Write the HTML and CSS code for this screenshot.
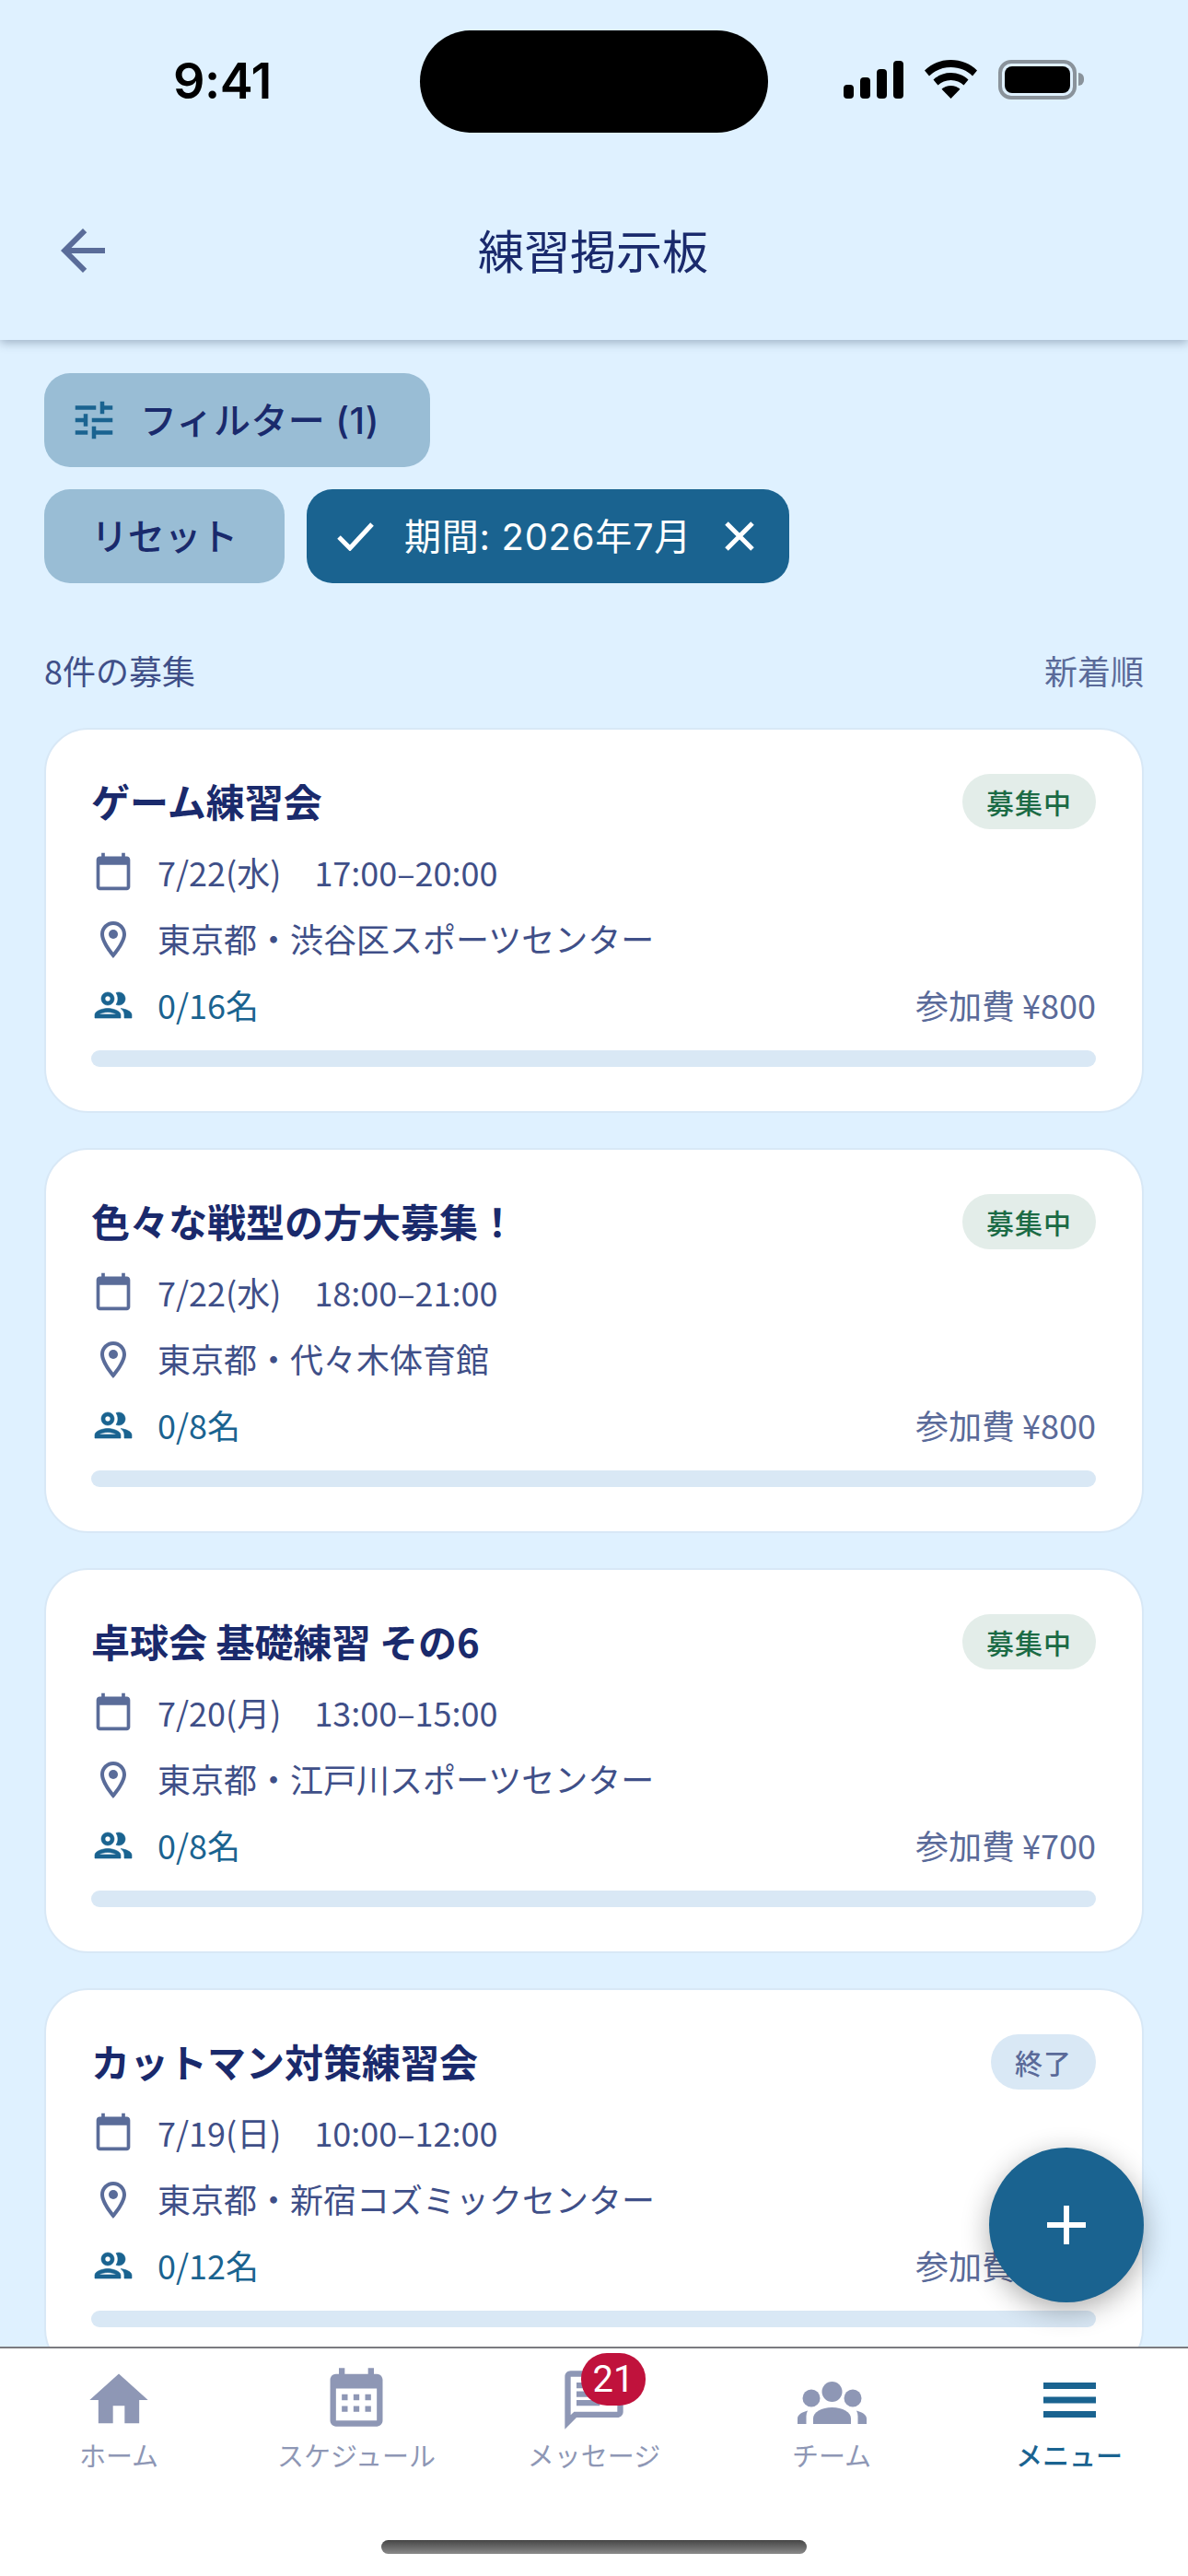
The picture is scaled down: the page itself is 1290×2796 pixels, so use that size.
FILE: index.html
```html
<!DOCTYPE html>
<html lang="ja">
<head>
  <meta charset="UTF-8">
  <meta name="viewport" content="width=device-width, initial-scale=1.0">
  <title>練習掲示板</title>
  <link rel="stylesheet" href="styles.css">
</head>
<body>
  <div class="phone">
    <header class="top">
      <div class="status">
        <span class="time">9:41</span>
        <div class="island"></div>
        <div class="status-icons">
          <svg class="signal" viewBox="0 0 65 41" fill="#000">
            <rect x="0" y="26" width="11" height="15" rx="4"/>
            <rect x="18" y="18" width="11" height="23" rx="4"/>
            <rect x="36" y="9" width="11" height="32" rx="4"/>
            <rect x="54" y="0" width="11" height="41" rx="4"/>
          </svg>
          <svg class="wifi" viewBox="0 0 57 42" fill="#000">
            <path d="M28.500 0C17.500 0 7.500 4 0 11.500l5 6C11 11.500 19 8 28.500 8S46 11.500 52 17.500l5-6C49.500 4 39.500 0 28.500 0z"/>
            <path d="M28.500 14c-7.500 0-14 2.800-19 7.500l5 6c3.500-3.400 8.500-5.500 14-5.500s10.500 2.100 14 5.500l5-6c-5-4.700-11.500-7.500-19-7.500z"/>
            <path d="M28.500 28c-4 0-7.500 1.500-10 3.800L28.500 42l10-10.200c-2.500-2.300-6-3.800-10-3.800z"/>
          </svg>
          <div class="battery"><div class="battery-fill"></div></div>
          <div class="battery-cap"></div>
        </div>
      </div>
      <div class="title-bar">
        <svg class="back" viewBox="0 0 24 24"><path d="M20 11H7.830l5.590-5.590L12 4l-8 8 8 8 1.410-1.410L7.830 13H20v-2z"/></svg>
        <h1>練習掲示板</h1>
      </div>
    </header>

    <main class="content">
      <div class="filters">
        <button class="chip filter-btn">
          <svg class="tune" viewBox="0 0 24 24"><path d="M3 17v2h6v-2H3zM3 5v2h10V5H3zm10 16v-2h8v-2h-8v-2h-2v6h2zM7 9v2H3v2h4v2h2V9H7zm14 4v-2H11v2h10zm-6-4h2V7h4V5h-4V3h-2v6z"/></svg>
          <span>フィルター (1)</span>
        </button>
        <div class="filter-row">
          <button class="chip reset"><span>リセット</span></button>
          <button class="chip active">
            <svg class="check" viewBox="0 0 40 32"><path d="M2 17l12 12L38 3"/></svg>
            <span>期間: 2026年7月</span>
            <svg class="close" viewBox="0 0 32 32"><path d="M2 2l28 28M30 2L2 30"/></svg>
          </button>
        </div>
      </div>

      <div class="list-head">
        <span class="count">8件の募集</span>
        <span class="sort">新着順</span>
      </div>

      <div class="cards">
        <article class="card">
          <div class="card-top">
            <h2>ゲーム練習会</h2>
            <span class="badge open">募集中</span>
          </div>
          <div class="row">
            <svg class="ico ico-cal" viewBox="0 0 24 24"><path d="M20 3h-1V1h-2v2H7V1H5v2H4c-1.100 0-2 .9-2 2v16c0 1.100.9 2 2 2h16c1.100 0 2-.9 2-2V5c0-1.100-.9-2-2-2zm0 18H4V8h16v13z"/></svg>
            <span>7/22(水)</span><span class="hours">17:00–20:00</span>
          </div>
          <div class="row">
            <svg class="ico" viewBox="0 0 24 24"><path d="M12 2C8.130 2 5 5.130 5 9c0 5.250 7 13 7 13s7-7.750 7-13c0-3.870-3.130-7-7-7zM7 9c0-2.760 2.240-5 5-5s5 2.240 5 5c0 2.880-2.880 7.190-5 9.880C9.920 16.210 7 11.850 7 9z"/><circle cx="12" cy="9" r="2.500"/></svg>
            <span>東京都・渋谷区スポーツセンター</span>
          </div>
          <div class="row">
            <svg class="ico ico-people" viewBox="0 0 24 24"><path d="M9 13.750c-2.340 0-7 1.170-7 3.500V19h14v-1.750c0-2.330-4.660-3.500-7-3.500zM4.340 17c.84-.58 2.870-1.250 4.660-1.250s3.820.67 4.660 1.250H4.340zM9 12c1.930 0 3.500-1.570 3.500-3.500S10.930 5 9 5 5.500 6.570 5.500 8.500 7.070 12 9 12zm0-5c.83 0 1.500.67 1.500 1.500S9.830 10 9 10s-1.500-.67-1.500-1.500S8.170 7 9 7zm7.040 6.810c1.160.84 1.960 1.960 1.960 3.440V19h4v-1.750c0-2.020-3.500-3.170-5.960-3.440zM15 12c1.930 0 3.500-1.570 3.500-3.500S16.930 5 15 5c-.54 0-1.040.13-1.500.35.63.89 1 1.980 1 3.150s-.37 2.260-1 3.150c.46.22.96.35 1.500.35z"/></svg>
            <span class="members">0/16名</span>
            <span class="fee">参加費 ¥800</span>
          </div>
          <div class="bar"></div>
        </article>

        <article class="card">
          <div class="card-top">
            <h2>色々な戦型の方大募集！</h2>
            <span class="badge open">募集中</span>
          </div>
          <div class="row">
            <svg class="ico ico-cal" viewBox="0 0 24 24"><path d="M20 3h-1V1h-2v2H7V1H5v2H4c-1.100 0-2 .9-2 2v16c0 1.100.9 2 2 2h16c1.100 0 2-.9 2-2V5c0-1.100-.9-2-2-2zm0 18H4V8h16v13z"/></svg>
            <span>7/22(水)</span><span class="hours">18:00–21:00</span>
          </div>
          <div class="row">
            <svg class="ico" viewBox="0 0 24 24"><path d="M12 2C8.130 2 5 5.130 5 9c0 5.250 7 13 7 13s7-7.750 7-13c0-3.870-3.130-7-7-7zM7 9c0-2.760 2.240-5 5-5s5 2.240 5 5c0 2.880-2.880 7.190-5 9.880C9.920 16.210 7 11.850 7 9z"/><circle cx="12" cy="9" r="2.500"/></svg>
            <span>東京都・代々木体育館</span>
          </div>
          <div class="row">
            <svg class="ico ico-people" viewBox="0 0 24 24"><path d="M9 13.750c-2.340 0-7 1.170-7 3.500V19h14v-1.750c0-2.330-4.660-3.500-7-3.500zM4.340 17c.84-.58 2.870-1.250 4.660-1.250s3.820.67 4.660 1.250H4.340zM9 12c1.930 0 3.500-1.570 3.500-3.500S10.930 5 9 5 5.500 6.570 5.500 8.500 7.070 12 9 12zm0-5c.83 0 1.500.67 1.500 1.500S9.830 10 9 10s-1.500-.67-1.500-1.500S8.170 7 9 7zm7.040 6.810c1.160.84 1.960 1.960 1.960 3.440V19h4v-1.750c0-2.020-3.500-3.170-5.960-3.440zM15 12c1.930 0 3.500-1.570 3.500-3.500S16.930 5 15 5c-.54 0-1.040.13-1.500.35.63.89 1 1.980 1 3.150s-.37 2.260-1 3.150c.46.22.96.35 1.500.35z"/></svg>
            <span class="members">0/8名</span>
            <span class="fee">参加費 ¥800</span>
          </div>
          <div class="bar"></div>
        </article>

        <article class="card">
          <div class="card-top">
            <h2>卓球会 基礎練習 その6</h2>
            <span class="badge open">募集中</span>
          </div>
          <div class="row">
            <svg class="ico ico-cal" viewBox="0 0 24 24"><path d="M20 3h-1V1h-2v2H7V1H5v2H4c-1.100 0-2 .9-2 2v16c0 1.100.9 2 2 2h16c1.100 0 2-.9 2-2V5c0-1.100-.9-2-2-2zm0 18H4V8h16v13z"/></svg>
            <span>7/20(月)</span><span class="hours">13:00–15:00</span>
          </div>
          <div class="row">
            <svg class="ico" viewBox="0 0 24 24"><path d="M12 2C8.130 2 5 5.130 5 9c0 5.250 7 13 7 13s7-7.750 7-13c0-3.870-3.130-7-7-7zM7 9c0-2.760 2.240-5 5-5s5 2.240 5 5c0 2.880-2.880 7.190-5 9.880C9.920 16.210 7 11.850 7 9z"/><circle cx="12" cy="9" r="2.500"/></svg>
            <span>東京都・江戸川スポーツセンター</span>
          </div>
          <div class="row">
            <svg class="ico ico-people" viewBox="0 0 24 24"><path d="M9 13.750c-2.340 0-7 1.170-7 3.500V19h14v-1.750c0-2.330-4.660-3.500-7-3.500zM4.340 17c.84-.58 2.870-1.250 4.660-1.250s3.820.67 4.660 1.250H4.340zM9 12c1.930 0 3.500-1.570 3.500-3.500S10.930 5 9 5 5.500 6.570 5.500 8.500 7.070 12 9 12zm0-5c.83 0 1.500.67 1.500 1.500S9.830 10 9 10s-1.500-.67-1.500-1.500S8.170 7 9 7zm7.040 6.810c1.160.84 1.960 1.960 1.960 3.440V19h4v-1.750c0-2.020-3.500-3.170-5.960-3.440zM15 12c1.930 0 3.500-1.570 3.500-3.500S16.930 5 15 5c-.54 0-1.040.13-1.500.35.63.89 1 1.980 1 3.150s-.37 2.260-1 3.150c.46.22.96.35 1.500.35z"/></svg>
            <span class="members">0/8名</span>
            <span class="fee">参加費 ¥700</span>
          </div>
          <div class="bar"></div>
        </article>

        <article class="card">
          <div class="card-top">
            <h2>カットマン対策練習会</h2>
            <span class="badge closed">終了</span>
          </div>
          <div class="row">
            <svg class="ico ico-cal" viewBox="0 0 24 24"><path d="M20 3h-1V1h-2v2H7V1H5v2H4c-1.100 0-2 .9-2 2v16c0 1.100.9 2 2 2h16c1.100 0 2-.9 2-2V5c0-1.100-.9-2-2-2zm0 18H4V8h16v13z"/></svg>
            <span>7/19(日)</span><span class="hours">10:00–12:00</span>
          </div>
          <div class="row">
            <svg class="ico" viewBox="0 0 24 24"><path d="M12 2C8.130 2 5 5.130 5 9c0 5.250 7 13 7 13s7-7.750 7-13c0-3.870-3.130-7-7-7zM7 9c0-2.760 2.240-5 5-5s5 2.240 5 5c0 2.880-2.880 7.190-5 9.880C9.920 16.210 7 11.850 7 9z"/><circle cx="12" cy="9" r="2.500"/></svg>
            <span>東京都・新宿コズミックセンター</span>
          </div>
          <div class="row">
            <svg class="ico ico-people" viewBox="0 0 24 24"><path d="M9 13.750c-2.340 0-7 1.170-7 3.500V19h14v-1.750c0-2.330-4.660-3.500-7-3.500zM4.340 17c.84-.58 2.870-1.250 4.660-1.250s3.820.67 4.660 1.250H4.340zM9 12c1.930 0 3.500-1.570 3.500-3.500S10.930 5 9 5 5.500 6.570 5.500 8.500 7.070 12 9 12zm0-5c.83 0 1.500.67 1.500 1.500S9.830 10 9 10s-1.500-.67-1.500-1.500S8.170 7 9 7zm7.040 6.810c1.160.84 1.960 1.960 1.960 3.440V19h4v-1.750c0-2.020-3.500-3.170-5.960-3.440zM15 12c1.930 0 3.500-1.570 3.500-3.500S16.930 5 15 5c-.54 0-1.040.13-1.500.35.63.89 1 1.980 1 3.150s-.37 2.260-1 3.150c.46.22.96.35 1.500.35z"/></svg>
            <span class="members">0/12名</span>
            <span class="fee">参加費 ¥800</span>
          </div>
          <div class="bar"></div>
        </article>
      </div>
    </main>

    <button class="fab">
      <svg viewBox="0 0 42 42"><path d="M21 0v42M0 21h42"/></svg>
    </button>

    <nav class="tabs">
      <div class="tab-row">
        <div class="tab">
          <div class="tab-icon">
            <svg viewBox="0 0 24 24"><path d="M10 20v-6h4v6h5v-8h3L12 3 2 12h3v8z"/></svg>
          </div>
          <span>ホーム</span>
        </div>
        <div class="tab">
          <div class="tab-icon">
            <svg class="schedule" viewBox="0 0 24 24"><path d="M19 4h-1V2h-2v2H8V2H6v2H5c-1.110 0-1.990.9-1.990 2L3 20c0 1.100.89 2 2 2h14c1.100 0 2-.9 2-2V6c0-1.100-.9-2-2-2zm0 16H5V9h14v11zM7 11h2v2H7zm4 0h2v2h-2zm4 0h2v2h-2zM7 15h2v2H7zm4 0h2v2h-2zm4 0h2v2h-2z"/></svg>
          </div>
          <span>スケジュール</span>
        </div>
        <div class="tab">
          <div class="tab-icon">
            <svg viewBox="0 0 24 24"><path d="M20 2H4c-1.100 0-1.990.9-1.990 2L2 22l4-4h14c1.100 0 2-.9 2-2V4c0-1.100-.9-2-2-2zm0 14H5.170L4 17.170V4h16v12zM6 12h8v2H6zm0-3h12v2H6zm0-3h12v2H6z"/></svg>
            <span class="unread">21</span>
          </div>
          <span>メッセージ</span>
        </div>
        <div class="tab">
          <div class="tab-icon">
            <svg class="team" viewBox="0 0 75 46">
              <circle cx="15" cy="18" r="9.500"/>
              <circle cx="60" cy="18" r="9.500"/>
              <circle class="head" cx="37.500" cy="11" r="11"/>
              <path d="M17 46v-6c0-7 9-12 20.500-12S58 33 58 40v6z"/>
              <path d="M0 46v-6c0-4 5-7 11-8.500-1 2-1.500 4-1.500 6V46z"/>
              <path d="M75 46v-6c0-4-5-7-11-8.500 1 2 1.500 4 1.500 6V46z"/>
            </svg>
          </div>
          <span>チーム</span>
        </div>
        <div class="tab current">
          <div class="tab-icon">
            <svg class="menu" viewBox="0 0 57 38"><path d="M0 0h57v7H0zM0 15.500h57v7H0zM0 31h57v7H0z"/></svg>
          </div>
          <span>メニュー</span>
        </div>
      </div>
      <div class="home-bar"></div>
    </nav>
  </div>
</body>
</html>
```

FILE: styles.css
```css
* {
  box-sizing: border-box;
}

body {
  margin: 0;
  font-family: "Noto Sans CJK JP", "Noto Sans", sans-serif;
  background-color: #dff1ff;
}

button {
  font: inherit;
  border: none;
}

.phone {
  position: relative;
  width: 1290px;
  height: 2796px;
  display: flex;
  flex-direction: column;
  overflow: hidden;
}

/* top bar */
.top {
  flex: none;
  height: 369px;
  background-color: #dff1ff;
  box-shadow: 0 3px 10px rgba(40, 60, 90, 0.35);
  z-index: 2;
}

.status {
  height: 176px;
  padding: 33px 113px 0 188px;
  display: flex;
  justify-content: space-between;
  align-items: flex-start;
}

.time {
  margin-top: 21px;
  font-family: Inter, sans-serif;
  font-weight: 600;
  font-size: 54px;
  line-height: 68px;
  letter-spacing: -0.5px;
  color: #000;
}

.island {
  width: 378px;
  height: 111px;
  margin-left: 80px;
  border-radius: 56px;
  background-color: #000;
}

.status-icons {
  margin-top: 32px;
  display: flex;
  align-items: flex-start;
}

.signal {
  width: 65px;
  height: 41px;
  margin-top: 1px;
}

.wifi {
  width: 57px;
  height: 42px;
  margin-left: 23px;
}

.battery {
  width: 85px;
  height: 43px;
  margin-left: 23px;
  padding: 3px;
  border: 4px solid #8a939b;
  border-radius: 14px;
}

.battery-fill {
  height: 100%;
  border-radius: 8px;
  background-color: #000;
}

.battery-cap {
  width: 6px;
  height: 14px;
  margin: 14px 0 0 2px;
  border-radius: 0 6px 6px 0;
  background-color: #8a939b;
}

.title-bar {
  position: relative;
  height: 193px;
  display: flex;
  justify-content: center;
  align-items: center;
}

.back {
  position: absolute;
  left: 54px;
  top: 60px;
  width: 72px;
  height: 72px;
  fill: #5a6c99;
}

.title-bar h1 {
  margin: 0 2px 6px 0;
  font-size: 50px;
  font-weight: 400;
  color: #1a2a6c;
}

/* filters */
.content {
  flex: 1;
  min-height: 0;
  padding: 36px 48px 0;
  overflow: hidden;
}

.filters {
  display: flex;
  flex-direction: column;
  align-items: flex-start;
  gap: 24px;
}

.filter-row {
  display: flex;
  gap: 24px;
}

.chip {
  height: 102px;
  display: flex;
  align-items: center;
  border-radius: 28px;
  font-family: Inter, "Noto Sans CJK JP", sans-serif;
  font-size: 40px;
  font-weight: 500;
  letter-spacing: 0.4px;
  color: #1a2a6c;
  background-color: #99bdd5;
}

.chip span {
  margin-bottom: 4px;
}

.filter-btn {
  width: 419px;
  padding: 0 0 0 27px;
  gap: 23px;
}

.tune {
  width: 54px;
  height: 54px;
  fill: #1a6390;
}

.reset {
  width: 261px;
  padding: 0;
  justify-content: center;
  letter-spacing: -0.3px;
}

.chip.active {
  width: 524px;
  padding: 0 0 0 33px;
  font-weight: 400;
  letter-spacing: 0.7px;
  color: #fff;
  background-color: #1a6390;
}

.check {
  width: 40px;
  height: 32px;
  margin-right: 33px;
  fill: none;
  stroke: #fff;
  stroke-width: 5;
}

.close {
  width: 32px;
  height: 32px;
  margin-left: 36px;
  fill: none;
  stroke: #fff;
  stroke-width: 5;
}

.list-head {
  margin: 68px 0 37px;
  display: flex;
  justify-content: space-between;
  font-size: 36px;
  line-height: 52px;
}

.count {
  color: #3f4f88;
}

.sort {
  color: #5a6a99;
}

/* cards */
.cards {
  display: flex;
  flex-direction: column;
  gap: 38px;
}

.card {
  flex: none;
  height: 418px;
  padding: 48px 50px 0 49px;
  border: 2px solid #d8e8f6;
  border-radius: 48px;
  background-color: #fff;
}

.card-top {
  height: 60px;
  margin-bottom: 22px;
  display: flex;
  justify-content: space-between;
  align-items: center;
}

.card h2 {
  margin: 0 0 3px;
  font-size: 42px;
  font-weight: 700;
  color: #1a2a6c;
}

.badge {
  height: 60px;
  padding: 0 26px;
  border-radius: 30px;
  font-size: 30px;
  line-height: 60px;
  font-weight: 500;
  letter-spacing: 1px;
}

.badge.open {
  color: #1b6b45;
  background-color: #e3ede9;
}

.badge.closed {
  color: #5a6a99;
  background-color: #d9e8f5;
}

.row {
  height: 52px;
  margin-bottom: 20px;
  display: flex;
  align-items: center;
  font-size: 36px;
  color: #3f4f88;
}

.row span {
  margin-bottom: 4px;
}

.ico {
  flex: none;
  width: 48px;
  height: 48px;
  margin: 0 24px 0 0;
  fill: #5a6c99;
}

.ico-cal {
  width: 44px;
  height: 44px;
  margin: -4px 26px 0 2px;
}

.ico-people {
  fill: #1a6390;
  stroke: #1a6390;
  stroke-width: 0.3;
  margin-top: -2px;
}

.hours {
  margin-left: 36px;
}

.members {
  color: #1a6390;
}

.fee {
  margin-left: auto;
  color: #5a6a99;
}

.bar {
  height: 18px;
  margin-top: 22px;
  border-radius: 9px;
  background-color: #d9e8f5;
}

/* floating button */
.fab {
  position: absolute;
  left: 1074px;
  top: 2331px;
  width: 168px;
  height: 168px;
  padding: 0;
  display: flex;
  align-items: center;
  justify-content: center;
  border-radius: 50%;
  background-color: #1a6390;
  box-shadow: 0 8px 30px rgba(0, 0, 0, 0.32);
  z-index: 3;
}

.fab svg {
  width: 42px;
  height: 42px;
  fill: none;
  stroke: #fff;
  stroke-width: 6;
}

/* bottom tabs */
.tabs {
  flex: none;
  height: 249px;
  border-top: 2px solid #7b7b80;
  background-color: #fff;
  z-index: 2;
}

.tab-row {
  padding-top: 16px;
  display: flex;
}

.tab {
  flex: 1;
  display: flex;
  flex-direction: column;
  align-items: center;
  font-size: 29px;
  line-height: 36px;
  color: #8e97b5;
}

.tab-icon {
  position: relative;
  width: 76px;
  height: 76px;
  margin-bottom: 5px;
  display: flex;
  align-items: center;
  justify-content: center;
}

.tab-icon svg {
  width: 76px;
  height: 76px;
  margin-top: 4px;
  fill: #8e97b5;
}

.tab-icon .schedule {
  margin-top: -2px;
}

.tab-icon .team {
  width: 75px;
  height: 46px;
  margin-top: 9px;
  flex: none;
}

.team .head {
  stroke: #fff;
  stroke-width: 3;
  paint-order: stroke;
}

.tab-icon .menu {
  width: 57px;
  height: 38px;
  margin-top: 4px;
  fill: #1a6390;
}

.tab.current {
  font-weight: 500;
  color: #1a6390;
}

.unread {
  position: absolute;
  left: 24px;
  top: -11px;
  width: 70px;
  height: 57px;
  border-radius: 28px;
  font-family: Roboto, sans-serif;
  font-size: 40px;
  line-height: 57px;
  text-align: center;
  color: #fff;
  background-color: #c0123c;
}

.home-bar {
  width: 462px;
  height: 15px;
  margin: 75px auto 0;
  border-radius: 8px;
  background: linear-gradient(#454545, #8a8a8a);
}
```
